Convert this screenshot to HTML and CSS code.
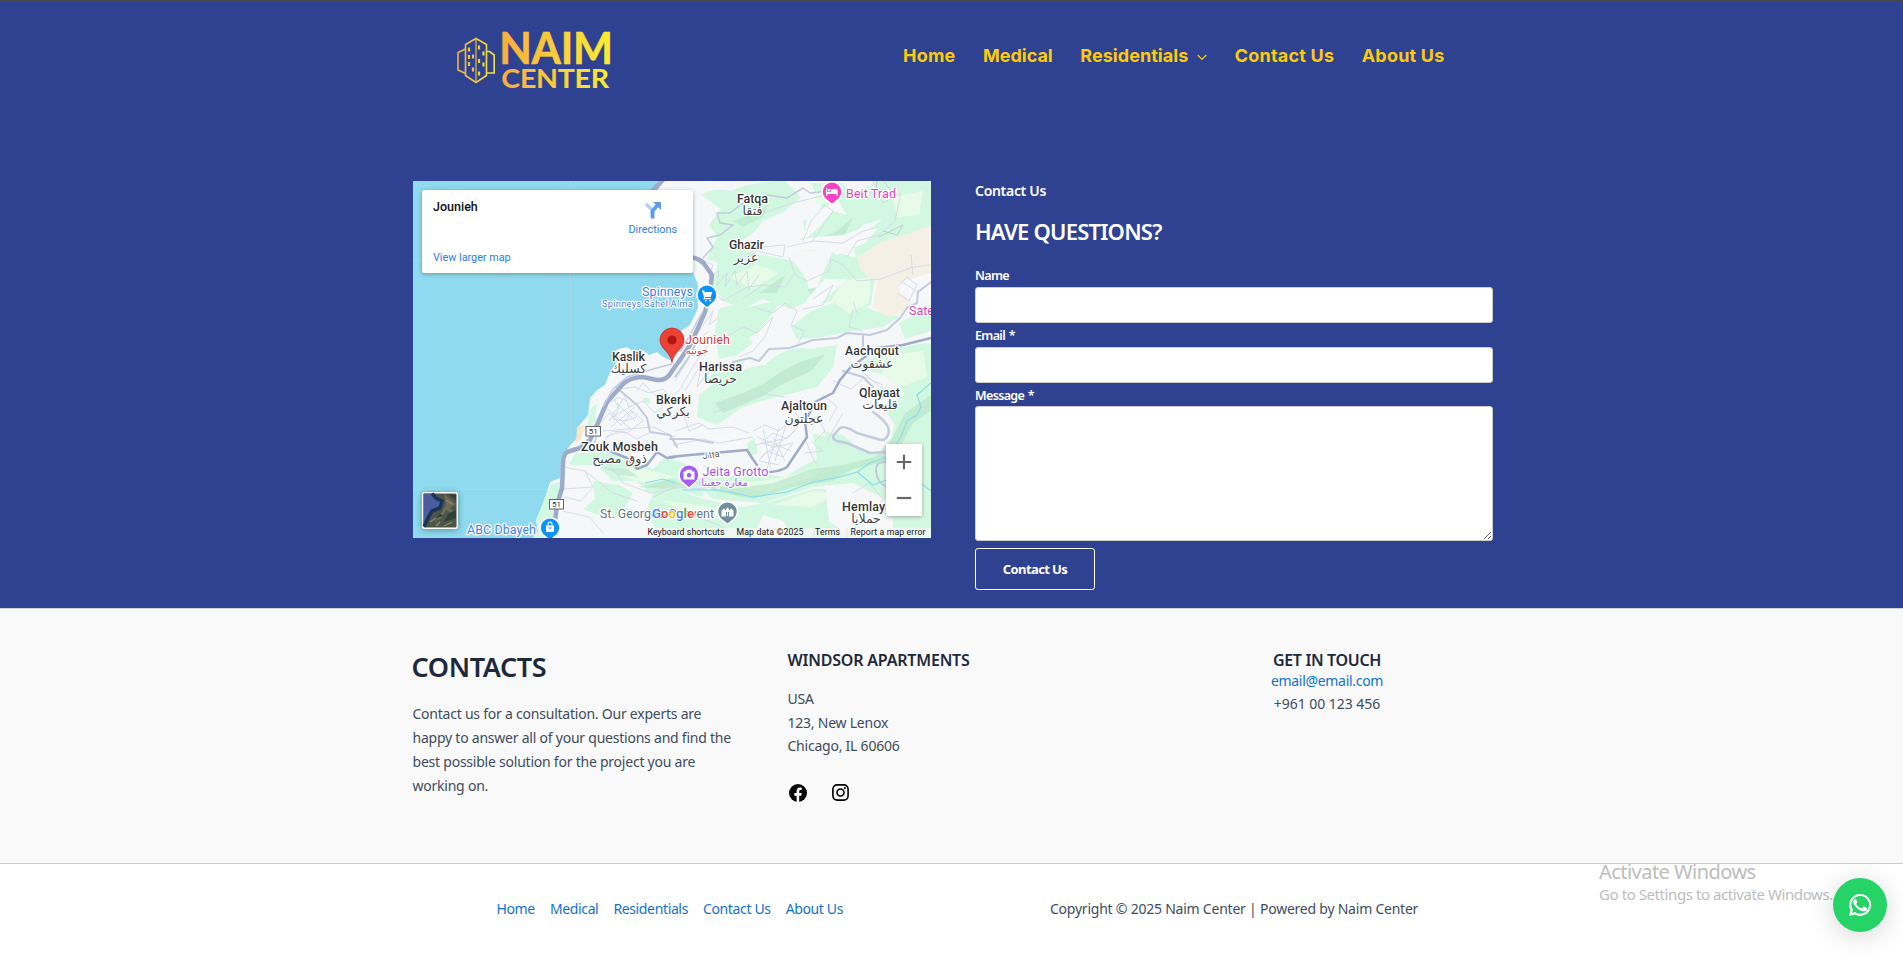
FILE: index.html
```html
<!DOCTYPE html>
<html lang="en">
<head>
<meta charset="utf-8">
<title>Contact Us - Naim Center</title>
<link rel="stylesheet" href="styles.css">
</head>
<body>
<div class="hero">
  <header class="header">
    <a class="logo" href="#">
      <svg width="164" height="76" viewBox="0 0 164 76">
        <defs>
          <linearGradient id="gold" gradientUnits="userSpaceOnUse" x1="48" y1="0" x2="156" y2="0"><stop offset="0" stop-color="#fbad41"/><stop offset="1" stop-color="#f9ed32"/></linearGradient>
          <linearGradient id="goldIcon" gradientUnits="userSpaceOnUse" x1="3" y1="0" x2="41" y2="0"><stop offset="0" stop-color="#f3ae45"/><stop offset="1" stop-color="#f4e63a"/></linearGradient>
        </defs>
        <g fill="none" stroke="url(#goldIcon)" stroke-width="1.600">
          <path d="M11.500 16.500L22 10.500L32.500 16.500V47.500L22 54.500L11.500 47.500Z"/>
          <path d="M22 11V54" stroke-width="1.100"/>
          <path d="M11.500 21L4 24.500V42L11.500 45.500M32.500 23.500H35.500L40.200 27V45H32.500"/>
        </g>
        <path fill="none" stroke="url(#goldIcon)" stroke-width="2.200" d="M15 19.500v4M15 27v4M15 34v4M19 26.500v4M19 39.500v4M25 17.500v4M25 31v4M25 43.500v4M29.500 23.500v4M29.500 34.500v4"/>
        <g fill="url(#gold)" stroke="url(#gold)" font-family="Lato, sans-serif" font-weight="700">
          <text x="45.200" y="36" font-size="44" stroke-width=".6" textLength="113.500" lengthAdjust="spacingAndGlyphs">NAIM</text>
          <text x="47.300" y="60" font-size="27" stroke-width=".1" textLength="107.500" lengthAdjust="spacingAndGlyphs">CENTER</text>
        </g>
      </svg>
    </a>
    <nav class="nav">
      <a href="#">Home</a>
      <a href="#">Medical</a>
      <a href="#">Residentials <svg class="chev" width="10" height="7" viewBox="0 0 10 7"><path d="M.7 1L5 5.500L9.300 1" fill="none" stroke="currentColor" stroke-width="1.200"/></svg></a>
      <a href="#">Contact Us</a>
      <a href="#">About Us</a>
    </nav>
  </header>

  <main class="contact">
    <div class="map">
      <svg class="map-canvas" width="518" height="357" viewBox="0 0 518 357">
        <rect width="518" height="357" fill="#8fdaee"/>
        <path d="M157.500 0V357M0 78.500H300M0 308.500H140" stroke="#a3dcea" fill="none"/>
        <path fill="#f5f7f9" d="M245 0L233 15L262 30L272 70L285 104L285 127L277 144L269 149L265 160L259 180L250 176L244 171L236 174L230 169L221 171L214 166L206 168L200 171L207 176L197 191L192 204L184 209L177 217L175 234L165 246L164 257L155 267L149 277L147 297L137 301L132 317L128 329L123 339L125 350L120 357H518V0Z"/>
        <g fill="#d3f8e2">
          <path d="M288 14Q300 6 318 10Q340 0 372 0L388 16L372 30L350 40L340 52L326 62L334 70L312 84L294 78L304 56L296 44L308 28Z"/>
          <path d="M398 2H430Q440 18 452 8L462 0H518V66Q490 74 470 84L444 88L440 60L470 38L450 44L430 62L400 70L378 68L392 54L390 40L410 30Z"/>
          <path d="M305 80Q330 66 350 74L380 80L392 96L400 118L378 128L350 118L330 128L310 120L300 104Z"/>
          <path d="M420 70L446 78L462 96L458 124L438 134L420 120L400 124L408 96Z"/>
          <path d="M306 128Q320 122 336 126L370 118L354 140L344 152L322 166L312 156L300 160Z"/>
          <path d="M398 130L430 118L462 130L486 136L470 146L440 150L410 156L384 158L378 146Z"/>
          <path d="M302 202Q330 186 352 184Q372 164 398 168L424 164L420 186L404 206L380 212L356 218L330 226L304 244L284 236L286 214Z"/>
          <path d="M440 186Q480 164 518 162V357H480L476 320L440 302L400 306L350 322L300 318L280 300L344 292L372 296L388 286L404 278L400 252L440 264L472 276L482 244L470 226L492 214L480 196Z"/>
          <path d="M182 272Q200 268 220 280L240 288L252 276L276 284L290 300L290 316L262 308L236 312L224 300L200 300L186 286Z"/>
          <path d="M180 300L206 304L220 312L212 326L226 332L196 338L170 328L182 318Z"/>
          <path d="M258 306L290 318L330 326L360 320L400 308L432 308L420 336L432 357H380L370 340L350 334L340 357H250L232 332L240 312Z"/>
          <path d="M149 300L144 324L138 357H121L125 350L123 339L132 317L137 304Z"/>
          <path d="M162 272L182 272L184 284L156 284ZM176 230L184 222L182 240L174 250ZM230 217H237V222H231ZM292 200L308 184L332 180L326 190L300 204ZM410 250L430 254L440 262L420 268ZM334 262L346 254L344 272L336 276Z"/>
          <path d="M304 164L330 150L340 162L324 174L306 178ZM486 142L518 124V150L492 158Z"/>
        </g>
        <g fill="#e8fbe8">
          <path d="M430 100L458 96L456 122L436 132L418 120ZM316 96L344 84L366 92L340 108ZM400 12L424 8L420 20L404 24ZM480 16L510 10L506 34L484 36Z"/>
          <path d="M470 174L510 170L514 196L488 206L470 194ZM310 300L350 300L410 288L400 296L350 312ZM360 324L400 310L424 312L400 326ZM250 320L290 324L320 332L290 338ZM196 290L226 286L262 296L230 302Z"/>
        </g>
        <g fill="#b9e6cb" opacity=".65">
          <path d="M302 222L330 212L352 202Q380 180 412 174L398 190L368 204L348 216L310 232Z"/>
          <path d="M518 230L500 242L488 264L476 280L440 288L420 300L380 306L340 318L300 310L280 300L320 308L360 302L400 288L430 284L462 276L480 256L492 232L518 214Z"/>
          <path d="M320 40L346 30L356 22L350 36L330 46ZM396 62L424 50L440 36L432 54L410 64ZM346 112L372 94L364 112ZM188 286L214 288L226 296L206 294ZM226 306L258 298L274 304L250 308ZM394 108L420 104L400 116Z"/>
        </g>
        <path fill="#f5f0e6" d="M518 44L492 54L470 60L444 76L448 90L464 100L460 126L474 136L488 132L500 118L518 110Z"/>
        <g fill="#f6f8fa">
          <path d="M374 62L402 56L430 54L448 48L466 46L452 62L424 74L416 68L378 70ZM390 60L394 38L412 26L424 18L434 34L420 30L404 48ZM484 102L504 96L518 92V116L500 122L488 112ZM394 118L412 98L434 98L408 122L396 126Z"/>
          <path d="M338 250L352 240L366 244L386 216L410 226L406 250L392 258L386 276L370 292L350 288L346 270ZM258 250L284 242L300 256L322 250L340 256L330 268L260 272ZM412 304L436 308L444 330L480 338V357H440L416 340Z"/>
        </g>
        <path d="M164 246L171 244L168 258L163 262Z" fill="#fbe6c4"/>
        <!-- minor streets -->
        <g fill="none" stroke="#d3d9e8" stroke-width=".9">
          <path d="M288 78L300 84L296 96L306 90L304 104L314 92L312 106L322 90L324 104L334 90L336 108L346 94M300 110L310 120L334 106L350 104M330 80L344 70L370 76L372 64L350 66L336 72"/>
          <path d="M390 60L398 40L412 24L420 30L408 48L398 62M374 66L400 60L430 62L450 50L466 46M376 76L382 94L394 100L416 90L418 78L430 84L444 100L468 98L500 86L518 84M344 34L380 22L412 14L440 16L470 8M460 0L470 22L488 12L482 40L466 54L444 60L434 76"/>
          <path d="M340 126L360 132L372 122L384 130L378 144L392 150L384 164M310 158L330 146L344 152L360 136L352 156L340 170L326 176M330 118L350 104L372 106L380 94M400 118L420 104L410 124L390 128M440 128L436 146L450 150"/>
          <path d="M484 106L494 96L504 104L496 120L484 112M488 100L506 112M498 74L500 94M440 120L444 132"/>
          <path d="M206 208L222 206L236 212L250 208L258 216L270 206M210 212L216 226L230 220L242 232L250 226M196 222L206 216L214 220M186 244L196 232L208 244L220 230L230 240L214 252L200 250L190 262M192 256L210 250L224 258L236 252M200 216L206 228L200 238L212 240L224 236L216 228M204 222L222 240M200 236L220 224M194 228L218 248M198 246L222 226M210 218L196 240M190 250L240 246L262 256M256 236L270 232L276 250L290 244M224 210L230 202L244 216"/>
          <path d="M262 200L274 180L284 160L296 150M268 206L286 176L302 156M272 210L290 180L284 206L296 190M286 150L300 130L296 144L306 136M262 250L286 242L296 248L320 246L336 252M260 264L290 258L306 262L340 256M300 232L324 222L348 212L372 216"/>
          <path d="M340 250L352 244L366 250L376 240L386 244L374 258L360 252L348 262L362 266L380 262L370 276L354 270L346 280L366 284M350 248L358 288M366 246L354 288M374 240L362 280M344 256L378 270M348 276L382 250M390 216L380 228L388 240L404 236L412 250L400 262L410 270L392 272M410 214L424 226L416 240M360 256L372 280M342 264L370 258M352 260L366 274M392 258L402 282"/>
          <path d="M150 286L172 290L180 306L168 320L152 316M172 290L200 312L224 320M150 330L176 336L190 352M180 306L150 308M240 316L262 306L292 308M440 312L456 302L470 318L462 330M430 320L446 340L436 357M290 338L310 346L320 357M420 200L438 208L452 196L470 204M444 186L460 200L476 212M414 260L430 232M192 276L210 302L238 312L280 304L300 292"/>
        </g>
        <!-- secondary roads -->
        <g fill="none" stroke="#c3cbde" stroke-width="1.500" stroke-linejoin="round" stroke-linecap="round">
          <path d="M342 21L354 14L374 17L390 7L397 12L407 11L418 2"/>
          <path d="M330 22L317 32L304 32L307 42L320 44L307 54L294 57L300 66L290 77"/>
          <path d="M464 0L462 18L480 12L472 2M466 56L490 44L484 54L470 50" stroke-width="1"/>
          <path stroke-width="2.500" d="M460 231Q470 238 474 244Q477 250 475 254Q473 259 468 259L444 252Q432 244 427 247L420 255Q420 259 424 260L434 262L457 272L474 271"/>
          <path stroke-width="2" d="M257 258L280 258L300 262M476 280L466 282Q463 284 463 290Q464 302 474 306M430 190L450 196L460 206"/>
          <path stroke-width="2" d="M204 207L224 224L234 237L237 251L257 254L264 266M262 196L276 176L282 164"/>
          <path stroke-width="2" d="M320 181L337 177L346 180L356 168L377 167L400 159L424 157L434 152L457 154L474 149L487 137L494 127L504 122L505 111L518 101M450 154V172"/>
        </g>
        <!-- main roads -->
        <g fill="none" stroke="#9fabcb" stroke-linejoin="round" stroke-linecap="round">
          <path stroke-width="2.500" d="M257 276L277 274L334 269L339 277L344 284M357 291Q368 290 374 286L382 274L394 256L392 241L402 221L420 212L427 199L437 187L464 167L490 164L518 157"/>
          <path stroke-width="2.500" d="M194 269L214 277L224 288L234 284L244 271L254 277L262 276"/>
          <path stroke-width="5" d="M238 12L252 -4"/>
          <path stroke-width="4.500" d="M278 76Q288 78 292 84L299 94L297 111L292 131L285 147L277 164L267 179L259 190Q254 200 244 199L230 196Q218 196 210 203L194 221L184 244L177 259L167 267L154 271Q150 274 150 284L149 307L144 324L140 357"/>
          <path stroke-width="1.500" stroke="#c3cbde" d="M186 248L180 266M259 183L240 188L214 196L200 208L190 226M290 130L268 170"/>
        </g>
        <path fill="none" stroke="#8bdcf0" stroke-width="1.200" d="M518 202L504 214L508 226L504 234L494 240L488 256L474 276L457 282L444 291L427 296L400 301L374 311L340 316L307 309L270 309M444 291L460 304L476 298M474 276L518 310M232 302L250 298L262 302"/>

        <g class="place">
          <text x="324" y="22" textLength="31">Fatqa</text><text x="316" y="68" textLength="35">Ghazir</text>
          <text x="286" y="190" textLength="43">Harissa</text><text x="432" y="174" textLength="54">Aachqout</text>
          <text x="199" y="180" textLength="33">Kaslik</text><text x="243" y="223" textLength="35">Bkerki</text>
          <text x="168" y="269.500" textLength="77">Zouk Mosbeh</text><text x="368" y="229" textLength="46">Ajaltoun</text>
          <text x="446" y="216" textLength="41">Qlayaat</text><text x="429" y="330" textLength="50">Hemlaya</text>
        </g>
        <g class="place-ar">
          <text x="339.500" y="34">فتقا</text><text x="333" y="81">عزير</text><text x="307.500" y="201.500">حريصا</text>
          <text x="459" y="187">عشقوت</text><text x="215.500" y="192">كسليك</text><text x="260" y="235">بكركي</text>
          <text x="206.500" y="282">ذوق مصبح</text><text x="391" y="241.500">عجلتون</text><text x="467" y="228">قليعات</text><text x="453" y="342">حملايا</text>
        </g>
        <g class="poi">
          <text fill="#e83fc0" x="433" y="17" textLength="50">Beit Trad</text>
          <text fill="#e83fc0" x="496" y="134">Sate</text>
          <text fill="#3d7df0" x="229" y="115" textLength="51">Spinneys</text>
          <text fill="#3d7df0" x="189" y="125.500" textLength="91" font-size="9.500">Spinneys Sahel Alma</text>
          <text fill="#d93838" x="272" y="163" textLength="45">Jounieh</text>
          <text fill="#a055ee" x="289.500" y="295" textLength="66">Jeita Grotto</text>
          <text fill="#5a7684" x="187" y="337" textLength="114">St. George's Convent</text>
          <text fill="#3d7df0" x="54" y="353" textLength="69">ABC Dbayeh</text>
        </g>
        <g class="poi-ar"><text fill="#d93838" x="284" y="172.500">جونيه</text><text fill="#a055ee" x="311.500" y="305">مغارة جعيتا</text></g>
        <text x="290" y="278" font-size="9" fill="#555" class="poi" textLength="17" transform="rotate(-8 290 278)">Jitta</text>
        <g class="shield"><rect x="173" y="245.500" width="14.500" height="9.500"/><text x="180.300" y="253.300">51</text><rect x="136.500" y="318.500" width="14" height="9.500"/><text x="143.500" y="326.300">51</text></g>

        <g stroke="#fff" stroke-width="1.500">
          <path fill="#f742c4" d="M419 23.500L412 17.800A10 10 0 1 1 426 17.800Z"/>
          <path fill="#0b93f6" d="M294 127L287 121A10 10 0 1 1 301 121Z"/>
          <path fill="#a55bf5" d="M276 307L269 301A10 10 0 1 1 283 301Z"/>
          <path fill="#72909c" d="M314.500 343.500L307.500 337.800A10 10 0 1 1 321.500 337.800Z"/>
          <path fill="#0b93f6" d="M137 359.500L130 353.800A10 10 0 1 1 144 353.800Z"/>
        </g>
        <g fill="#fff">
          <path d="M413 7h1.200v4h3.500V8h5.500q1.500 0 1.500 1.500V15h-1.200v-2h-9.300v2H413ZM415 8.200h2v2h-2z"/>
          <path d="M289 109.500h2.200l.6 1.500h7.500l-1.600 5h-5.400l-.4 1h6v1.200h-7.500l.6-2.200-1.500-5H289zM292 119h1.600v1.500H292zM296.500 119h1.600v1.500h-1.600z"/>
          <path fill-rule="evenodd" d="M270.500 290.500h2l1-1.800h5L279.500 290.500h2v8h-11zM276 292a2.300 2.300 0 1 0 .1 0z"/>
          <path d="M308.500 335.500v-6l2.300-2 2.200 2v6zM316 335.500v-6l2.300-2 2.200 2v6zM313 328l1.500-1.500 1.500 1.500v3h-1v4h-1v-4h-1z"/>
          <path fill-rule="evenodd" d="M133 344.500h8v6.500h-8zM134.500 344.500v-1.500a2.500 2.500 0 0 1 5 0v1.500h-1v-1.500a1.500 1.500 0 0 0-3 0v1.500zM135.500 346.500v1h3v-1z"/>
        </g>
        <path d="M259 181.500C257 170 247 168 247 159a12 12 0 1 1 24 0C271 168 261 170 259 181.500Z" fill="#ea4335" stroke="#c5221f" stroke-width=".7"/>
        <circle cx="259" cy="159" r="4.600" fill="#b31412"/>

        <rect x="232" y="347" width="286" height="10" fill="#f5f5f5" opacity=".75"/>
        <path d="M401 347v10M434 347v10" stroke="#ddd" stroke-width=".6"/>
        <g class="legal">
          <text x="234.500" y="354" textLength="77">Keyboard shortcuts</text><text x="323.500" y="354" textLength="67">Map data ©2025</text>
          <text x="402" y="354" textLength="25">Terms</text><text x="437.500" y="354" textLength="75">Report a map error</text>
        </g>
        <text class="google" x="239" y="337" textLength="42"><tspan fill="#4285f4">G</tspan><tspan fill="#ea4335">o</tspan><tspan fill="#fbbc04">o</tspan><tspan fill="#4285f4">g</tspan><tspan fill="#34a853">l</tspan><tspan fill="#ea4335">e</tspan></text>
      </svg>

      <div class="place-card">
        <div class="place-info"><strong>Jounieh</strong><a href="#">View larger map</a></div>
        <a class="directions" href="#">
          <svg width="18" height="18" viewBox="0 0 18 18"><path d="M2 3L8 9V12" fill="none" stroke="#b3d0f7" stroke-width="3.600"/><path d="M8.500 17.500V11.500Q8.500 9.500 10 8L13.500 4.500" fill="none" stroke="#5b9cea" stroke-width="3.800"/><path d="M9 1H17V9Z" fill="#5b9cea"/></svg>
          <span>Directions</span>
        </a>
      </div>

      <svg class="satellite" width="36" height="37" viewBox="0 0 36 37">
        <rect x=".7" y=".7" width="34.600" height="35.600" rx="2" fill="#4c5547" stroke="#fff" stroke-width="1.500"/>
        <path d="M1.500 1.500H11L14 6L19 9L18 15L10 18L5 25L1.500 34Z" fill="#4c5ba0"/>
        <path d="M10 1.500L14 6L20 9L18 16L10 19L6 26L2 34.500" fill="none" stroke="#163557" stroke-width="3.500"/>
        <path d="M22 2L34 12L28 16L34 24L24 18L20 26L12 30L20 20L24 12Z" fill="#6e6a58"/>
        <path d="M34 18L26 22L22 30L34 26ZM18 22L14 26L22 24ZM26 2L34 8V3Z" fill="#2f4037"/>
        <path d="M8 30L14 26M22 34L30 30M24 8L30 12M14 34L18 30" stroke="#918972" stroke-width="1.200"/>
      </svg>

      <div class="zoom">
        <button type="button" aria-label="Zoom in"><svg width="16" height="16" viewBox="0 0 16 16"><path d="M.8 8H15.200M8 .8V15.200" stroke="#666" stroke-width="2.200"/></svg></button>
        <button type="button" aria-label="Zoom out"><svg width="16" height="16" viewBox="0 0 16 16"><path d="M.8 8H15.200" stroke="#666" stroke-width="2.200"/></svg></button>
      </div>
    </div>

    <form class="form">
      <p class="eyebrow">Contact Us</p>
      <h2>HAVE QUESTIONS?</h2>
      <label for="name">Name</label>
      <input id="name" type="text">
      <label for="email">Email *</label>
      <input id="email" type="email">
      <label for="message">Message *</label>
      <textarea id="message"></textarea>
      <button class="submit" type="button">Contact Us</button>
    </form>
  </main>
</div>

<footer>
  <section class="widgets">
    <div class="about">
      <h2>CONTACTS</h2>
      <p>Contact us for a consultation. Our experts are happy to answer all of your questions and find the best possible solution for the project you are working on.</p>
    </div>
    <div class="address">
      <h3>WINDSOR APARTMENTS</h3>
      <p>USA<br>123, New Lenox<br>Chicago, IL 60606</p>
      <div class="social">
        <a href="#" aria-label="Facebook"><svg width="18" height="18" viewBox="0 0 18 18"><circle cx="9" cy="9" r="9"/><path fill="#f9f9f9" d="M7.600 18V11.700H5.300V9.100H7.600V7.100C7.600 4.900 8.900 3.600 11 3.600C11.900 3.600 12.800 3.800 12.800 3.800V6H11.600C10.500 6 10.200 6.700 10.200 7.400V9.100H12.700L12.300 11.700H10.200V18Z"/></svg></a>
        <a href="#" aria-label="Instagram"><svg width="17" height="17" viewBox="0 0 17 17"><rect x=".9" y=".9" width="15.200" height="15.200" rx="4.300" fill="none" stroke="#000" stroke-width="1.600"/><circle cx="8.500" cy="8.500" r="3.500" fill="none" stroke="#000" stroke-width="1.600"/><circle cx="12.900" cy="4.100" r="1.050"/></svg></a>
      </div>
    </div>
    <div class="touch">
      <h3>GET IN TOUCH</h3>
      <a href="#">email@email.com</a>
      <p>+961 00 123 456</p>
    </div>
  </section>
  <section class="bottom">
    <nav class="links"><a href="#">Home</a><a href="#">Medical</a><a href="#">Residentials</a><a href="#">Contact Us</a><a href="#">About Us</a></nav>
    <p>Copyright © 2025 Naim Center | Powered by Naim Center</p>
  </section>
</footer>

<div class="activate"><div class="activate-title">Activate Windows</div><div class="activate-sub">Go to Settings to activate Windows.</div></div>
<a class="whatsapp" href="#" aria-label="WhatsApp">
  <svg width="24" height="24" viewBox="0 0 24 24" fill="#fff"><path fill-rule="evenodd" d="M1 23L2.600 17.300A11 11 0 1 1 6.800 21.500ZM7.100 19.100L7.600 19.400A8.900 8.900 0 1 0 4.600 16.400L4.900 16.900L4 20Z"/><path d="M8.300 6.500C8 6 7.800 6 7.500 6C7 6 6.500 6.200 6.200 6.600C5.700 7.200 5.200 8 5.200 9C5.200 10.500 6.200 11.900 6.400 12.100C6.600 12.400 9 16.100 12.600 17.500C15.500 18.700 16.200 18.300 16.900 18.200C17.600 18.100 18.900 17.400 19.100 16.600C19.400 15.900 19.400 15.200 19.300 15.100C19.200 14.900 18.800 14.800 18.300 14.500C17.800 14.300 16.300 13.500 16 13.400C15.700 13.300 15.400 13.300 15.200 13.700C14.900 14.100 14.100 15 13.900 15.200C13.700 15.400 13.500 15.400 13.200 15.200C12.700 15 11.300 14.500 10 13.300C9.200 12.500 8.500 11.500 8.300 11.200C8.100 10.900 8.400 10.700 9.200 9.600C9.300 9.300 9.300 9.100 9.200 8.900Z"/></svg>
</a>
</body>
</html>
```
FILE: styles.css
```css
* { box-sizing: border-box; }
body { margin: 0; background: #fff; color: #3f4c60; font: 400 14px/24px "Noto Sans", "Open Sans", sans-serif; letter-spacing: -.23px; overflow: hidden; }
h2, h3, p { margin: 0; }
a { color: #0f72d2; text-decoration: none; }
svg { display: block; }

.hero { height: 608px; background: #2f4291; border-top: 2px solid #45474f; }
.header { display: flex; align-items: flex-start; height: 179px; padding-left: 454px; }
.logo { margin-top: 26px; width: 449px; }
.nav { display: flex; gap: 27.500px; margin-top: 42px; font: 700 18px/24px Inter, sans-serif; letter-spacing: .2px; }
.nav a { display: flex; align-items: center; color: #fdcb0a; white-space: nowrap; }
.nav a:nth-child(2) { letter-spacing: 0; }
.nav a:nth-child(3) { letter-spacing: .05px; }
.chev { margin: 2px 0 0 9px; }

.contact { display: grid; grid-template-columns: 518px 518px; column-gap: 44px; padding-left: 413px; }
.map { position: relative; width: 518px; height: 357px; overflow: hidden; letter-spacing: 0; font-family: Roboto, sans-serif; }
.place, .poi { font-family: Roboto, sans-serif; font-size: 12.500px; stroke: #fff; stroke-width: 2.500px; paint-order: stroke; stroke-linejoin: round; }
.place { font-weight: 500; fill: #333; }
.poi text[font-size] { font-size: 9.500px; }
text.poi { font-size: 9px; }
.place-ar, .poi-ar { font-family: "DejaVu Sans", sans-serif; text-anchor: middle; stroke: #fff; stroke-width: 2px; paint-order: stroke; }
.place-ar { font-size: 12.500px; fill: #444; }
.poi-ar { font-size: 10px; }
.shield rect { fill: #fff; stroke: #666; stroke-width: 1px; }
.shield text { font: 8px Roboto, sans-serif; text-anchor: middle; fill: #333; }
.legal { font: 8.700px Roboto, sans-serif; fill: #111; }
.google { font: 500 13px Roboto, sans-serif; stroke: #fff; stroke-width: 1.500px; paint-order: stroke; }

.place-card { position: absolute; left: 9px; top: 9px; width: 271px; height: 83px; display: flex; justify-content: space-between; padding: 8px 16px 8px 11px; background: #fff; border-radius: 2px; box-shadow: 0 1px 4px rgba(0,0,0,.3); font-size: 10.800px; line-height: 14px; }
.place-info { display: flex; flex-direction: column; gap: 36px; }
.place-info strong { font-size: 12.500px; font-weight: 500; line-height: 18px; color: #111; }
.place-card a { color: #2b7de9; }
.place-info a { margin-top: -1px; }
.directions { display: flex; flex-direction: column; align-items: center; padding-top: 3px; gap: 4px; }
.satellite { position: absolute; left: 9px; top: 311px; filter: drop-shadow(0 1px 3px rgba(0,0,0,.35)); }
.zoom { position: absolute; left: 473px; top: 263px; width: 36px; height: 72px; display: grid; grid-template-rows: 36px 36px; background: #fff; box-shadow: 0 1px 4px rgba(0,0,0,.3); }
.zoom button { display: grid; place-items: center; padding: 0; border: 0; background: none; }

.form { display: flex; flex-direction: column; color: #fff; }
.eyebrow { font-size: 14px; font-weight: 600; line-height: 20px; letter-spacing: -.3px; }
.form h2 { margin: 16px 0 23px; font-size: 22px; font-weight: 600; line-height: 28px; letter-spacing: -.78px; }
.form label { margin-bottom: 3px; font-size: 12.500px; font-weight: 600; line-height: 16px; letter-spacing: -.65px; word-spacing: 1px; }
.form input { height: 36px; margin: 0 0 5px; padding: 0 8px; border: 1px solid #ccc; border-radius: 3px; background: #fff; }
.form textarea { height: 135px; margin: -1px 0 7px; border: 1px solid #ccc; border-radius: 3px; background: #fff; resize: vertical; }
.submit { width: 120px; height: 42px; padding: 0; border: 1px solid #fff; border-radius: 3px; background: none; color: #fff; font: 700 13px/20px "Noto Sans", sans-serif; letter-spacing: -.6px; }

.widgets { display: grid; grid-template-columns: 375px 374px 331px; height: 255px; padding: 40px 0 0 412.500px; background: #f9f9f9; border-top: 1px solid #d5d5d8; }
.widgets h2, .widgets h3 { color: #1e293b; font-weight: 600; }
.about { width: 330px; }
.about h2 { margin: 0 0 17px -1px; font-size: 27px; line-height: 36px; letter-spacing: -.4px; }
.widgets h3 { font-size: 16px; line-height: 22px; letter-spacing: -.2px; }
.address p { margin-top: 16px; line-height: 23.500px; }
.social { display: flex; gap: 25px; margin-top: 26px; padding-left: 1.500px; }
.touch { text-align: center; line-height: 22.500px; }
.widgets .touch h3 { letter-spacing: -.35px; }
.touch a { display: block; margin-top: -1px; letter-spacing: -.3px; }
.touch p { letter-spacing: -.03px; }

.bottom { display: grid; grid-template-columns: 553.500px auto; padding: 33px 0 34px 496.500px; border-top: 1px solid #ccc; background: #fff; }
.links { display: flex; gap: 15px; letter-spacing: -.36px; }

.activate { position: absolute; left: 1599px; top: 860px; color: #bdbdbd; white-space: nowrap; }
.activate-title { font-size: 20px; line-height: 24px; letter-spacing: -.54px; }
.activate-sub { font-size: 15px; line-height: 20px; letter-spacing: -.42px; }
.whatsapp { position: absolute; left: 1833px; top: 878px; width: 54px; height: 54px; display: grid; place-items: center; border-radius: 50%; background: #25d366; box-shadow: 0 4px 26px rgba(0,0,0,.16); }
```
